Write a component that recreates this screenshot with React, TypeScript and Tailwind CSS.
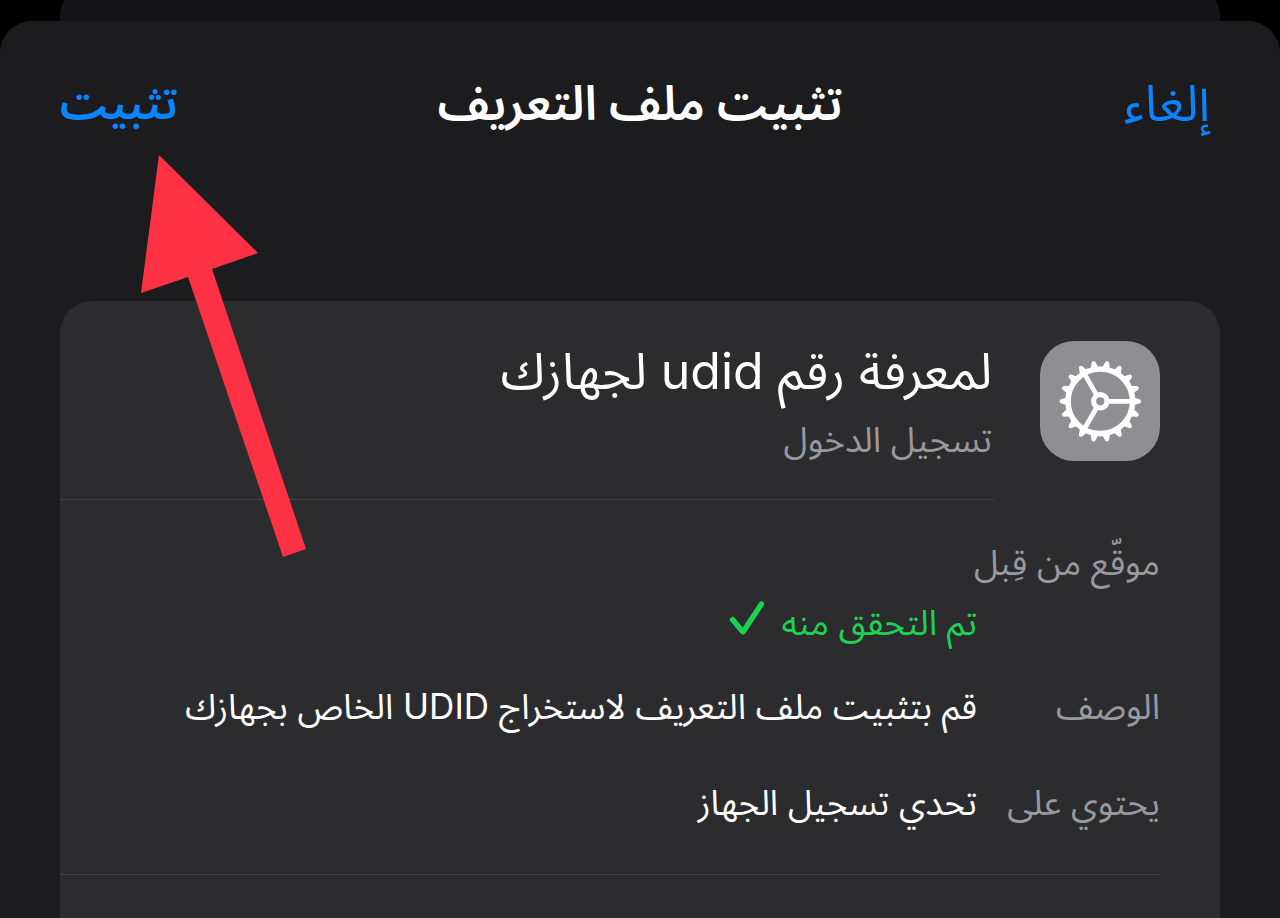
import { Fragment } from "react";

const details = [
  { label: "موقّع من قِبل", value: "تم التحقق منه", verified: true, space: "" },
  { label: "الوصف", value: "قم بتثبيت ملف التعريف لاستخراج UDID الخاص بجهازك", space: "pt-6" },
  { label: "يحتوي على", value: "تحدي تسجيل الجهاز", space: "pt-9" },
];

// 18 teeth, one every 20 degrees
const teeth = Array.from({ length: 18 }, (_, i) => i * 20);

function GearIcon() {
  return (
    <svg viewBox="0 0 120 120" className="size-[120px] shrink-0 rounded-[34px] bg-[#8e8e93]" aria-hidden="true">
      <g transform="translate(60.3 60.3)" fill="none" stroke="#fff">
        <circle r="32.3" strokeWidth="5.6" />
        <circle r="6.7" strokeWidth="5.2" />
        {[0, 120, 240].map((angle) => (
          <path key={angle} d="M8 0H32" strokeWidth="4.8" transform={`rotate(${angle})`} />
        ))}
        {teeth.map((angle) => (
          <path
            key={angle}
            d="M34 -3.8L39.6 -1.9Q42 0 39.6 1.9L34 3.8Z"
            fill="#fff"
            stroke="none"
            transform={`rotate(${angle})`}
          />
        ))}
      </g>
    </svg>
  );
}

function CheckIcon() {
  return (
    <svg viewBox="0 0 36 36" className="mt-2 size-9 shrink-0" fill="none" aria-hidden="true">
      <path d="M3.5 19.5L14 32L32.5 4" stroke="currentColor" strokeWidth="5.4" strokeLinecap="round" strokeLinejoin="round" />
    </svg>
  );
}

function Arrow() {
  return (
    <svg viewBox="0 0 166 402" className="absolute left-[141px] top-[155px] h-[402px] w-[166px] pointer-events-none" aria-hidden="true">
      <path d="M18 0L117 98L71 114L165 394L142 402L47 122L0 138Z" fill="#ff3144" />
    </svg>
  );
}

export default function App() {
  return (
    <div
      dir="rtl"
      lang="ar"
      className="relative flex min-h-screen flex-col overflow-hidden bg-black font-['Inter','Noto_Sans_Arabic','DejaVu_Sans',sans-serif] text-white"
    >
      <div className="mx-[60px] -mt-4 h-[37px] shrink-0 rounded-t-[32px] bg-[#151517]" />

      <main className="flex flex-1 flex-col rounded-t-[32px] bg-[#1c1c1e]">
        <header className="grid grid-cols-[1fr_auto_1fr] items-center px-[60px] pt-[50px] leading-[64px]">
          <button type="button" className="justify-self-start pr-[10px] text-[50px] text-[#0a84ff]">
            إلغاء
          </button>
          <h1 className="text-[48px] font-semibold">تثبيت ملف التعريف</h1>
          <button type="button" className="justify-self-end text-[45px] font-semibold text-[#0a84ff]">
            تثبيت
          </button>
        </header>

        <section className="mx-[60px] mt-[166px] flex-1 rounded-t-[32px] bg-[#2c2c2e]">
          <div className="flex pr-[60px]">
            <div className="pt-10 pb-[39px]">
              <GearIcon />
            </div>
            <div className="mr-[46px] flex-1 border-b border-[#414144] pt-9 pr-0.5 leading-[68px]">
              <h2 className="text-[50px]">لمعرفة رقم udid لجهازك</h2>
              <p className="text-[35px] text-[#98989f]">تسجيل الدخول</p>
            </div>
          </div>

          <div className="mr-[60px] border-b border-[#414144] pt-8 pb-[42px] text-[35px] leading-[60px]">
            <dl className="grid grid-cols-[183px_1fr]">
              {details.map((item) => (
                <Fragment key={item.label}>
                  <dt className={`whitespace-nowrap text-[#98989f] ${item.verified ? "col-span-2" : item.space}`}>
                    {item.label}
                  </dt>
                  <dd className={item.verified ? "col-start-2 flex items-start gap-4 text-[#1fd152]" : item.space}>
                    {item.value}
                    {item.verified && <CheckIcon />}
                  </dd>
                </Fragment>
              ))}
            </dl>
          </div>
        </section>
      </main>

      <Arrow />
    </div>
  );
}
